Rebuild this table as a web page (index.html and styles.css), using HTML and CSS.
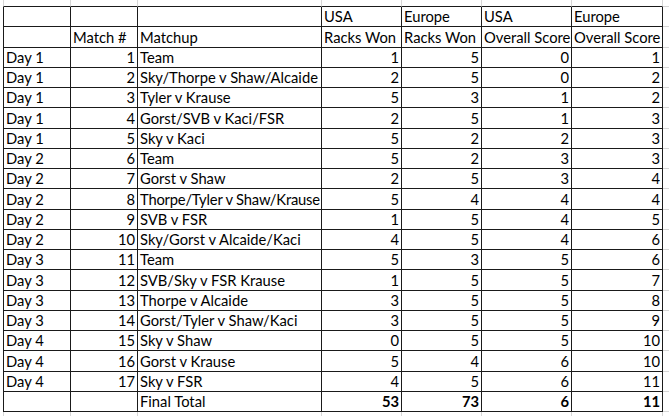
FILE: index.html
```html
<!DOCTYPE html>
<html>
<head>
<meta charset="utf-8">
<link rel="stylesheet" href="styles.css">
</head>
<body>
<table class="sheet">
  <colgroup>
    <col class="w1"><col class="w2"><col class="w3"><col class="w4"><col class="w5"><col class="w6"><col class="w7"><col class="wg">
  </colgroup>
  <tr class="edge-top"><td class="e first"></td><td class="e"></td><td class="e"></td><td class="e"></td><td class="e"></td><td class="e"></td><td class="e"></td><td class="g"></td></tr>
  <tr><td class="first"></td><td></td><td></td><td>USA</td><td>Europe</td><td>USA</td><td>Europe</td><td class="g"></td></tr>
  <tr class="tall"><td class="first"></td><td>Match #</td><td>Matchup</td><td>Racks Won</td><td>Racks Won</td><td>Overall Score</td><td>Overall Score</td><td class="g"></td></tr>
  <tr><td class="first">Day 1</td><td class="n">1</td><td>Team</td><td class="n">1</td><td class="n">5</td><td class="n">0</td><td class="n">1</td><td class="g"></td></tr>
  <tr><td class="first">Day 1</td><td class="n">2</td><td>Sky/Thorpe v Shaw/Alcaide</td><td class="n">2</td><td class="n">5</td><td class="n">0</td><td class="n">2</td><td class="g"></td></tr>
  <tr><td class="first">Day 1</td><td class="n">3</td><td>Tyler v Krause</td><td class="n">5</td><td class="n">3</td><td class="n">1</td><td class="n">2</td><td class="g"></td></tr>
  <tr class="tall"><td class="first">Day 1</td><td class="n">4</td><td>Gorst/SVB v Kaci/FSR</td><td class="n">2</td><td class="n">5</td><td class="n">1</td><td class="n">3</td><td class="g"></td></tr>
  <tr><td class="first">Day 1</td><td class="n">5</td><td>Sky v Kaci</td><td class="n">5</td><td class="n">2</td><td class="n">2</td><td class="n">3</td><td class="g"></td></tr>
  <tr><td class="first">Day 2</td><td class="n">6</td><td>Team</td><td class="n">5</td><td class="n">2</td><td class="n">3</td><td class="n">3</td><td class="g"></td></tr>
  <tr><td class="first">Day 2</td><td class="n">7</td><td>Gorst v Shaw</td><td class="n">2</td><td class="n">5</td><td class="n">3</td><td class="n">4</td><td class="g"></td></tr>
  <tr class="tall"><td class="first">Day 2</td><td class="n">8</td><td class="tight">Thorpe/Tyler v Shaw/Krause</td><td class="n">5</td><td class="n">4</td><td class="n">4</td><td class="n">4</td><td class="g"></td></tr>
  <tr><td class="first">Day 2</td><td class="n">9</td><td>SVB v FSR</td><td class="n">1</td><td class="n">5</td><td class="n">4</td><td class="n">5</td><td class="g"></td></tr>
  <tr><td class="first">Day 2</td><td class="n">10</td><td>Sky/Gorst v Alcaide/Kaci</td><td class="n">4</td><td class="n">5</td><td class="n">4</td><td class="n">6</td><td class="g"></td></tr>
  <tr><td class="first">Day 3</td><td class="n">11</td><td>Team</td><td class="n">5</td><td class="n">3</td><td class="n">5</td><td class="n">6</td><td class="g"></td></tr>
  <tr class="tall"><td class="first">Day 3</td><td class="n">12</td><td>SVB/Sky v FSR Krause</td><td class="n">1</td><td class="n">5</td><td class="n">5</td><td class="n">7</td><td class="g"></td></tr>
  <tr><td class="first">Day 3</td><td class="n">13</td><td>Thorpe v Alcaide</td><td class="n">3</td><td class="n">5</td><td class="n">5</td><td class="n">8</td><td class="g"></td></tr>
  <tr><td class="first">Day 3</td><td class="n">14</td><td>Gorst/Tyler v Shaw/Kaci</td><td class="n">3</td><td class="n">5</td><td class="n">5</td><td class="n">9</td><td class="g"></td></tr>
  <tr><td class="first">Day 4</td><td class="n">15</td><td>Sky v Shaw</td><td class="n">0</td><td class="n">5</td><td class="n">5</td><td class="n">10</td><td class="g"></td></tr>
  <tr class="tall"><td class="first">Day 4</td><td class="n">16</td><td>Gorst v Krause</td><td class="n">5</td><td class="n">4</td><td class="n">6</td><td class="n">10</td><td class="g"></td></tr>
  <tr><td class="first">Day 4</td><td class="n">17</td><td>Sky v FSR</td><td class="n">4</td><td class="n">5</td><td class="n">6</td><td class="n">11</td><td class="g"></td></tr>
  <tr><td class="first"></td><td></td><td>Final Total</td><td class="n b">53</td><td class="n b">73</td><td class="n b">6</td><td class="n b">11</td><td class="g"></td></tr>
  <tr class="edge-bottom"><td class="f first"></td><td class="f"></td><td class="f"></td><td class="f"></td><td class="f"></td><td class="f"></td><td class="f"></td><td class="fg"></td></tr>
</table>
</body>
</html>
```

FILE: styles.css
```css
html, body {
  margin: 0;
  padding: 0;
  background: #ffffff;
  overflow: hidden;
}

.sheet {
  margin-left: 3px;
  border-collapse: separate;
  border-spacing: 0;
  table-layout: fixed;
  width: 666px;
  font-family: "Lato", "Liberation Sans", sans-serif;
  font-size: 14.75px;
  color: #000;
}

.w1 { width: 68px; }
.w2 { width: 67px; }
.w3 { width: 184px; }
.w4 { width: 80px; }
.w5 { width: 80px; }
.w6 { width: 90px; }
.w7 { width: 91px; }
.wg { width: 6px; }

.sheet td {
  box-sizing: border-box;
  height: 20px;
  padding: 0 2px 2px 2px;
  line-height: 16px;
  vertical-align: bottom;
  white-space: nowrap;
  overflow: hidden;
  border-right: 1px solid #1a1a1a;
  border-bottom: 1px solid #1a1a1a;
  text-align: left;
}

.sheet tr.tall td {
  height: 21px;
}

.sheet td.first {
  border-left: 1px solid #1a1a1a;
  padding-left: 2px;
}

.sheet td.n {
  text-align: right;
  padding-right: 2px;
}

.sheet td.b {
  font-weight: 700;
}

.sheet td.tight {
  letter-spacing: -0.2px;
}

/* faint spreadsheet gridlines outside the bordered range */
.sheet tr.edge-top td {
  height: 7px;
  padding: 0;
  border-right: 1px solid #d6d6d6;
  border-bottom: 1px solid #1a1a1a;
}

.sheet tr.edge-top td.first {
  border-left: 1px solid #d6d6d6;
}

.sheet tr.edge-top td.g {
  border-bottom: 1px solid #d6d6d6;
  border-right: none;
}

.sheet td.g {
  border-right: none;
  border-bottom: 1px solid #d6d6d6;
  padding: 0;
}

.sheet tr.edge-bottom td {
  height: 5px;
  padding: 0;
  border-bottom: none;
  border-right: 1px solid #d6d6d6;
}

.sheet tr.edge-bottom td.first {
  border-left: 1px solid #d6d6d6;
}

.sheet tr.edge-bottom td.fg {
  border-right: none;
}
```
